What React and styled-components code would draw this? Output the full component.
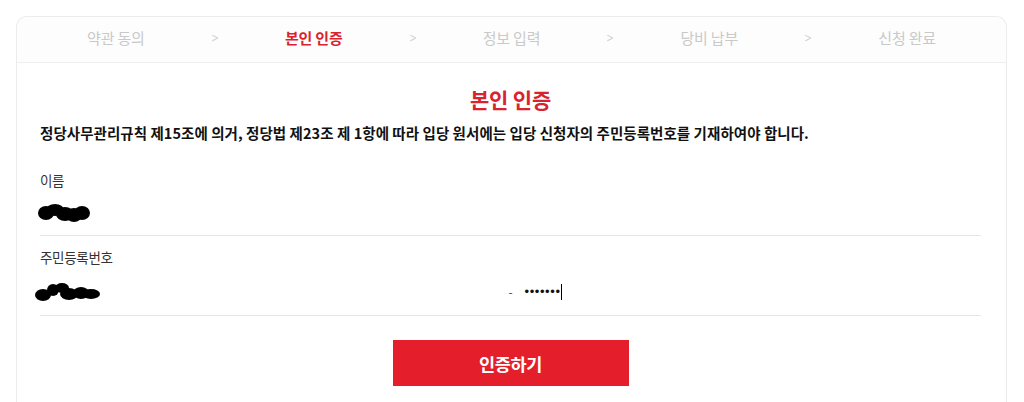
import React from "react";
import styled, { createGlobalStyle } from "styled-components";

const Global = createGlobalStyle`
  html, body { margin: 0; padding: 0; background: #fff; }
  body { font-family: "Noto Sans CJK KR", "Noto Sans", sans-serif; color: #222; }
  * { box-sizing: border-box; }
`;

const Page = styled.div`
  padding: 16px 17px 0 16px;
`;

const Card = styled.section`
  width: 991px;
  height: 400px;
  border: 1px solid #ececec;
  border-bottom: none;
  border-radius: 11px 11px 0 0;
  overflow: hidden;
`;

const Steps = styled.nav`
  display: flex;
  align-items: center;
  height: 46px;
  padding-bottom: 4px;
  border-bottom: 1px solid #efefef;
  background: #fdfdfd;
`;

const Step = styled.div`
  flex: 1;
  text-align: center;
  font-size: 15px;
  letter-spacing: -0.2px;
  font-weight: ${(p) => (p.$active ? 700 : 400)};
  color: ${(p) => (p.$active ? "#d9232e" : "#c9c9c9")};
`;

const Chevron = styled.span`
  width: 0;
  display: flex;
  justify-content: center;
  font-family: "DejaVu Sans", sans-serif;
  font-size: 13px;
  transform: scaleX(0.7);
  color: #d2d2d2;
  overflow: visible;
`;

const Body = styled.div`
  padding: 0 25px 0 23px;
  display: flex;
  flex-direction: column;
`;

const Title = styled.h2`
  margin: 22px 0 0;
  text-align: center;
  font-size: 21px;
  line-height: 28px;
  font-weight: 700;
  color: #d9232e;
  letter-spacing: -0.2px;
`;

const Notice = styled.p`
  margin: 10px 0 0;
  font-size: 14.5px;
  line-height: 20px;
  font-weight: 700;
  color: #111;
  letter-spacing: 0.05px;
`;

const Field = styled.div`
  margin-top: ${(p) => p.$gap}px;
  display: flex;
  flex-direction: column;
`;

const Label = styled.label`
  font-size: 13.5px;
  line-height: 22px;
  color: #333;
  letter-spacing: -0.3px;
`;

const ValueRow = styled.div`
  height: ${(p) => p.$h}px;
  display: flex;
  align-items: center;
  border-bottom: 1px solid #e6e6e6;
`;

const SplitRow = styled(ValueRow)`
  display: grid;
  grid-template-columns: 1fr auto 1fr;
  column-gap: 10px;
`;

const Slot = styled.span`
  display: flex;
  align-items: center;
`;

const Dash = styled.span`
  font-size: 12px;
  color: #444;
  width: 6px;
  text-align: center;
`;

const Secret = styled.span`
  display: flex;
  align-items: center;
  padding-left: 1px;
  font-family: "Liberation Sans", sans-serif;
  font-size: 13px;
  letter-spacing: 0.6px;
  color: #111;
`;

const Caret = styled.span`
  width: 1.5px;
  height: 16px;
  background: #000;
`;

const Button = styled.button`
  align-self: center;
  margin-top: 24px;
  width: 236px;
  height: 46px;
  border: none;
  background: #e41e2b;
  color: #fff;
  font-family: "Noto Sans CJK KR", sans-serif;
  font-size: 17.5px;
  font-weight: 700;
  letter-spacing: -0.3px;
  cursor: pointer;
`;

const NameBlob = () => (
  <svg width="54" height="22" viewBox="0 0 54 22" style={{ marginLeft: -2 }}>
    <g fill="#000">
      <ellipse cx="8" cy="11" rx="8" ry="7" />
      <ellipse cx="17" cy="8" rx="9" ry="6" />
      <ellipse cx="27" cy="12" rx="9" ry="7" />
      <ellipse cx="36" cy="13" rx="8" ry="7" />
      <ellipse cx="44" cy="11" rx="8" ry="7" />
    </g>
  </svg>
);

const IdBlob = () => (
  <svg width="66" height="22" viewBox="0 0 66 22" style={{ marginLeft: -5 }}>
    <g fill="#000">
      <ellipse cx="8" cy="14" rx="8" ry="6" />
      <ellipse cx="18" cy="9" rx="6" ry="6" />
      <ellipse cx="27" cy="7" rx="7" ry="5" />
      <ellipse cx="34" cy="13" rx="9" ry="6" />
      <ellipse cx="46" cy="12" rx="8" ry="6" />
      <ellipse cx="56" cy="13" rx="9" ry="5" />
    </g>
  </svg>
);

const steps = ["약관 동의", "본인 인증", "정보 입력", "당비 납부", "신청 완료"];

export default function App() {
  return (
    <>
      <Global />
      <Page>
        <Card>
          <Steps>
            {steps.map((s, i) => (
              <React.Fragment key={s}>
                {i > 0 && <Chevron>&gt;</Chevron>}
                <Step $active={i === 1}>{s}</Step>
              </React.Fragment>
            ))}
          </Steps>
          <Body>
            <Title>본인 인증</Title>
            <Notice>
              정당사무관리규칙 제15조에 의거, 정당법 제23조 제 1항에 따라 입당 원서에는 입당 신청자의 주민등록번호를 기재하여야 합니다.
            </Notice>
            <Field $gap={26}>
              <Label>이름</Label>
              <ValueRow $h={45}>
                <NameBlob />
              </ValueRow>
            </Field>
            <Field $gap={10}>
              <Label>주민등록번호</Label>
              <SplitRow $h={48}>
                <Slot>
                  <IdBlob />
                </Slot>
                <Dash>-</Dash>
                <Secret>
                  •••••••
                  <Caret />
                </Secret>
              </SplitRow>
            </Field>
            <Button>인증하기</Button>
          </Body>
        </Card>
      </Page>
    </>
  );
}
